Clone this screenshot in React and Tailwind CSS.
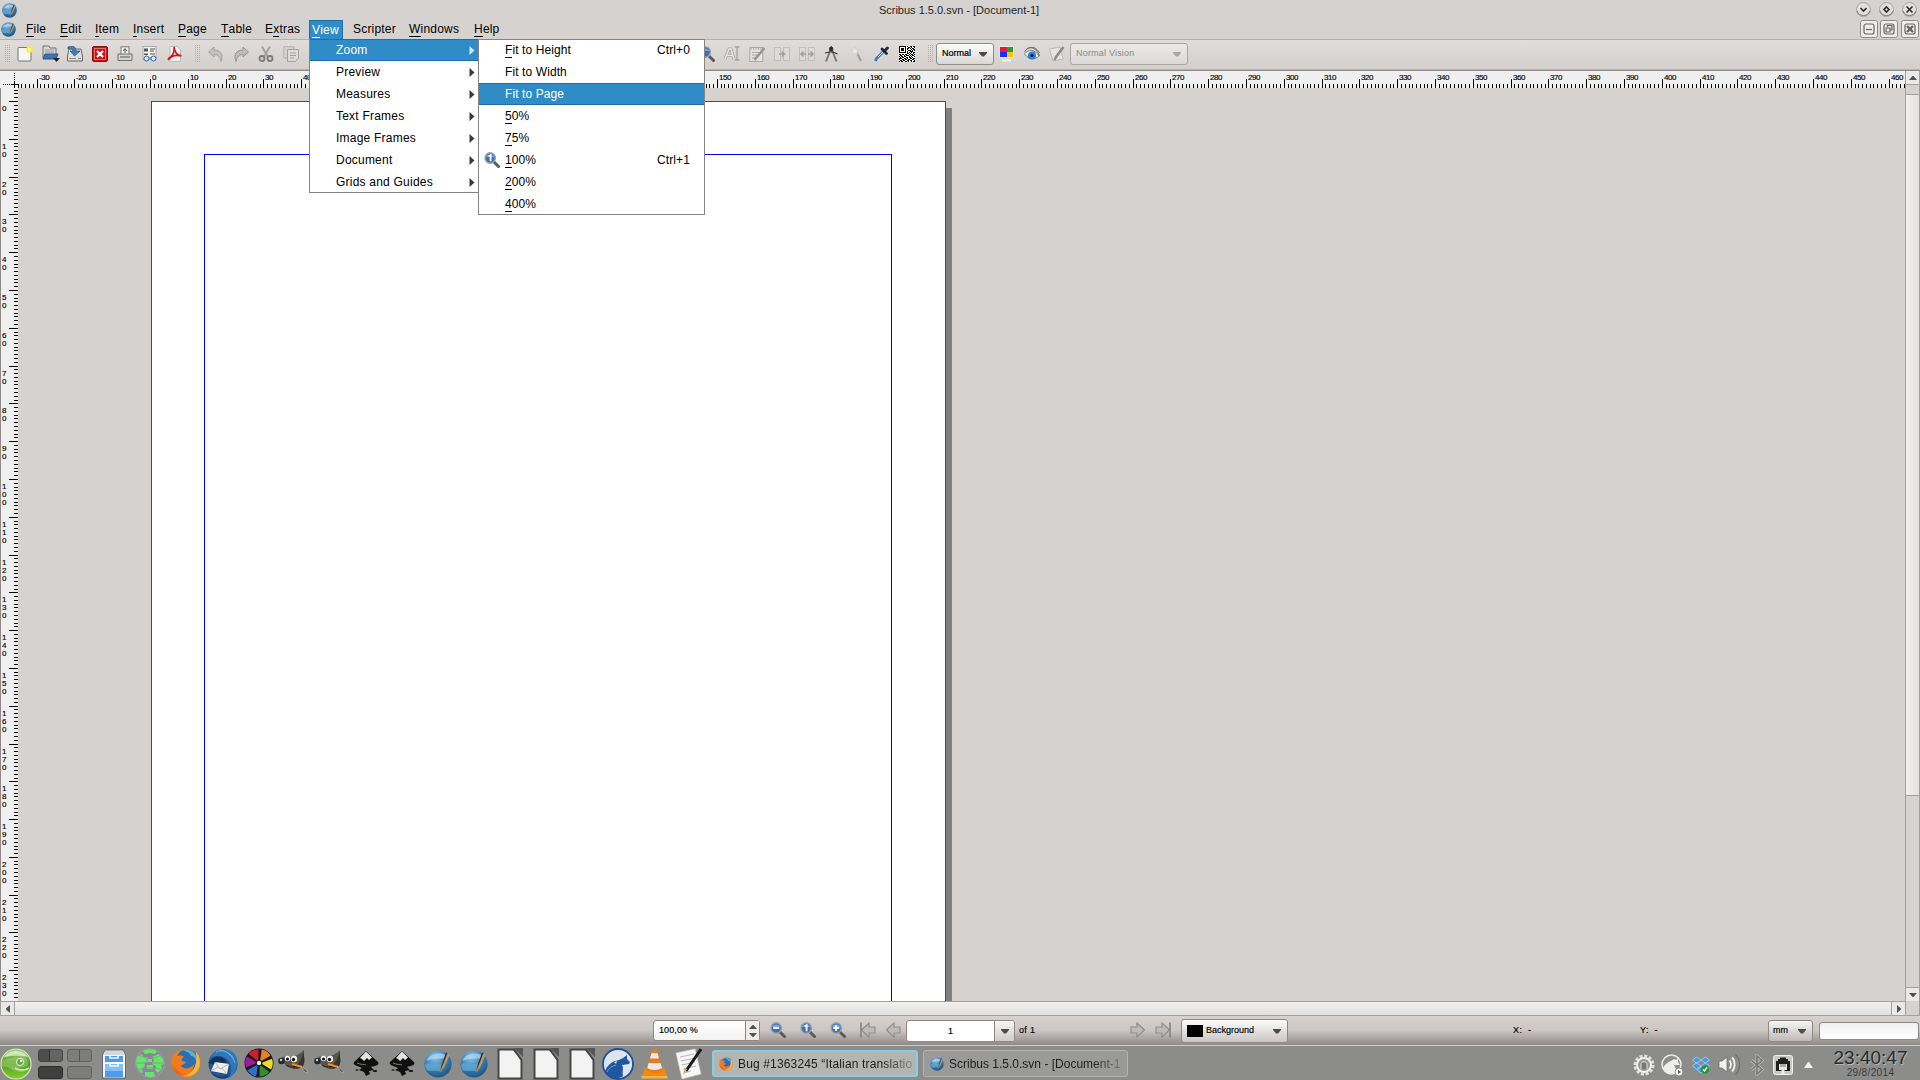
import { useState } from 'react';

const MM = 3.7795;

const menuItems = [
  { label: 'File', width: 'w-[34px]', key: 0 },
  { label: 'Edit', width: 'w-[35px]', key: 0 },
  { label: 'Item', width: 'w-[38px]', key: 0 },
  { label: 'Insert', width: 'w-[45px]', key: 0 },
  { label: 'Page', width: 'w-[43px]', key: 0 },
  { label: 'Table', width: 'w-[44px]', key: 0 },
  { label: 'Extras', width: 'w-[48px]', key: 1 },
  { label: 'View', width: 'w-[34px] mr-[6px]', key: 0 },
  { label: 'Scripter', width: 'w-[56px]', key: -1 },
  { label: 'Windows', width: 'w-[65px]', key: 0 },
  { label: 'Help', width: 'w-[40px]', key: 0 },
];

const viewMenu = ['Zoom', 'Preview', 'Measures', 'Text Frames', 'Image Frames', 'Document', 'Grids and Guides'];

const zoomMenu = [
  { label: 'Fit to Height', shortcut: 'Ctrl+0', key: 0 },
  { label: 'Fit to Width', key: -1 },
  { label: 'Fit to Page', key: -1, active: true },
  { label: '50%', key: 0 },
  { label: '75%', key: 0 },
  { label: '100%', shortcut: 'Ctrl+1', key: 0, icon: true },
  { label: '200%', key: 0 },
  { label: '400%', key: 0 },
];

const Icon = ({ size = 16, box = 16, className = '', children }) => (
  <svg width={size} height={size} viewBox={`0 0 ${box} ${box}`} className={`shrink-0 ${className}`} fill="none">
    {children}
  </svg>
);

const Mnemonic = ({ text, index }) => {
  if (index < 0) return <span>{text}</span>;
  return (
    <span>
      {text.slice(0, index)}
      <span className="inline-block h-[15px] border-b border-current leading-[15px]">{text[index]}</span>
      {text.slice(index + 1)}
    </span>
  );
};

/* ---------- logos ---------- */

const ScribusLogo = ({ size = 14, className = '' }) => (
  <Icon size={size} box={32} className={className}>
    <defs>
      <radialGradient id="scribusBall" cx="0.4" cy="0.25" r="0.8">
        <stop offset="0" stopColor="#8fc3e6" />
        <stop offset="0.5" stopColor="#3b84b8" />
        <stop offset="1" stopColor="#1d4f7c" />
      </radialGradient>
    </defs>
    <circle cx="16" cy="16" r="15.5" fill="url(#scribusBall)" />
    <path d="M3 12C7 3 23 1 28 9C20 10 12 9 3 12Z" fill="#b5d8ef" opacity="0.7" />
    <path d="M1 17C8 12 15 19 22 15L20 25C13 22 7 25 3 23Z" fill="#5fa7d3" opacity="0.8" />
    <path d="M27 3L29 6L23 20L18 25L19 17Z" fill="#b99a68" />
    <path d="M27 3L25 3L20 17L18 25L22 16Z" fill="#29333c" />
  </Icon>
);

const FirefoxLogo = ({ size = 30 }) => (
  <Icon size={size} box={30}>
    <defs>
      <linearGradient id="fox" x1="0" y1="0" x2="1" y2="1">
        <stop offset="0" stopColor="#f59a26" />
        <stop offset="0.5" stopColor="#e8611c" />
        <stop offset="1" stopColor="#e9a12c" />
      </linearGradient>
    </defs>
    <circle cx="15" cy="15" r="14.5" fill="url(#fox)" />
    <circle cx="16" cy="12.5" r="11" fill="#2a6fb3" />
    <path d="M12 2.5C19 -1 27 6 26 14C24 9 22 8 20 8C19 5 15 3 12 2.5Z" fill="#49b6e0" />
    <path d="M2 5C4 5 6 6 7 8C10 7 12 8 13 9C11 10 10 11 11 13L15 14C14 17 11 16 10 18C13 22 20 21 23 16C23 24 16 27 9 24C2 20 0 12 2 5Z" fill="#f07c1f" />
    <path d="M25 4C30 9 30 18 26 23C22 28 16 29 12 28C21 27 27 19 25 4Z" fill="#f6b73c" />
  </Icon>
);

const GeekoLogo = () => (
  <Icon size={32} box={32}>
    <defs>
      <linearGradient id="geeko" x1="0" y1="0" x2="0" y2="1">
        <stop offset="0" stopColor="#a8d37a" />
        <stop offset="0.5" stopColor="#4f9a20" />
        <stop offset="1" stopColor="#86d02f" />
      </linearGradient>
    </defs>
    <circle cx="16" cy="16" r="15" fill="url(#geeko)" stroke="#d7ecc2" strokeWidth="1.2" />
    <path d="M4 9C9 1 23 1 28 9C20 7 12 7 4 9Z" fill="#e8f4dc" opacity="0.75" />
    <path d="M1.500 14C8 9 16 10 22 8C27 9 28 14 28 17C26 20 21 19 17 20C20 22 26 22 29 20C27 25 17 25 11 21C7 18 3 18 1.500 19Z" fill="#9fcd76" opacity="0.6" />
    <path d="M15 20C20 23 26 22 29 20" stroke="#eef7e5" strokeWidth="1.4" />
    <circle cx="20" cy="14" r="3.6" fill="#63a836" stroke="#eef7e5" strokeWidth="1" />
    <circle cx="21" cy="13" r="1.2" fill="#fff" />
  </Icon>
);

const CabinetIcon = () => (
  <svg width="24" height="30" viewBox="0 0 24 30" className="shrink-0">
    <path d="M3 1H21L23.5 6V29H0.5V6Z" fill="#f4f6f8" stroke="#63686d" />
    <path d="M3 2H21L22 6H2Z" fill="#d3d6da" />
    <rect x="3" y="7" width="18" height="6" fill="#4f9aea" />
    <rect x="3" y="15" width="18" height="13" fill="#86bff5" />
    <rect x="3" y="22" width="18" height="6" fill="#4f9aea" />
    <path d="M8 7V9H16V7M8 15V17H16V15" stroke="#f5f5f5" strokeWidth="1.6" fill="none" />
    <path d="M2 14H22" stroke="#fff" />
  </svg>
);

const GlobeIcon = () => (
  <Icon size={30} box={30}>
    <circle cx="15" cy="15" r="14.5" fill="#8e8398" stroke="#a99bb5" strokeWidth="0.8" />
    <path d="M8 3C12 0.500 18 0.500 22 3L20 6L15 5L10 6Z" fill="#5eeb63" />
    <path d="M2 9L6 6L9 9L13 9L11 12L13 14L9 15L10 18L7 21L8 25L5 24L2 19L1 14Z" fill="#5eeb63" />
    <path d="M17 9L24 6L28 11L29 16L26 17L27 21L23 25L20 22L21 18L17 16L19 12Z" fill="#5eeb63" />
    <path d="M12 11H17V14H13ZM12 17H18V21H12ZM10 24H19L20 28C17 29.500 13 29.500 10 28Z" fill="#66e26e" />
    <path d="M4 7C10 11 20 11 26 7M1 15H29M3 22C10 19 20 19 27 22" stroke="#9a83ad" strokeWidth="0.8" fill="none" />
  </Icon>
);

const ThunderbirdIcon = () => (
  <Icon size={31} box={31}>
    <circle cx="16" cy="16" r="14.5" fill="#1f5590" />
    <path d="M3 10C7 -1 23 -2 29 8C32 16 29 26 22 30C26 21 24 12 16 9C11 7 6 8 3 10Z" fill="#2f78b8" />
    <path d="M9 4C15 1 23 4 26 10M12 2C19 2 26 8 28 15" stroke="#6bb2e0" strokeWidth="1" />
    <path d="M1 15L6 10C11 7 17 9 20 14L10 17Z" fill="#12335c" />
    <path d="M8 14L22 16L20 26L4 23Z" fill="#f0eee9" />
    <path d="M8 14L13 21L22 16M4 23L11 19M20 26L15 20" stroke="#a9a6a0" strokeWidth="0.8" />
    <path d="M3 23C8 29 17 31 24 25L20 30C13 32 6 29 3 23Z" fill="#14406f" />
  </Icon>
);

const wheelColors = ['#e98021', '#f0d928', '#2e9130', '#2f6fd0', '#a2189f', '#d01c2c'];

const WheelIcon = () => (
  <Icon size={30} box={30}>
    <circle cx="15" cy="15" r="14.5" fill="#1d1a1a" />
    {wheelColors.map((color, i) => (
      <path key={color} d="M15 11.500L12.500 1.500C16 0.700 20 1.500 23 4L16.500 12Z" fill={color} transform={`rotate(${i * 60 + 22} 15 15)`} />
    ))}
    <circle cx="15" cy="15" r="2.2" fill="#f1f1f1" />
  </Icon>
);

const GimpIcon = () => (
  <svg width="31" height="26" viewBox="0 0 31 26" className="shrink-0">
    <path d="M4 8L9 7C15 9 21 6 26 1C25 7 28 12 25 17C20 22 10 20 6 14Z" fill="#5b5549" />
    <path d="M26 1C25 7 28 12 25 17C22 20 17 20 14 19C22 16 24 9 26 1Z" fill="#38342d" />
    <circle cx="3.5" cy="12" r="3.3" fill="#1c2a2c" />
    <circle cx="3" cy="11" r="1.2" fill="#b7d4d2" />
    <circle cx="9.5" cy="9.5" r="2.8" fill="#f1f1ee" />
    <circle cx="16" cy="10" r="3.2" fill="#f1f1ee" />
    <circle cx="9.5" cy="10" r="1.5" fill="#111" />
    <circle cx="15.5" cy="10.5" r="1.7" fill="#111" />
    <path d="M8 16C12 19 17 18 20 16" stroke="#22201c" fill="none" />
    <path d="M14 15L24 18" stroke="#ee8c25" strokeWidth="2" />
    <path d="M23 17L30 23L27 23Z" fill="#3b3b3b" stroke="#c7c7c7" strokeWidth="0.5" />
  </svg>
);

const InkscapeIcon = () => (
  <svg width="28" height="27" viewBox="0 0 28 27" className="shrink-0">
    <path d="M14 1L26 12C28 15 23 16 19 17L22 20L17 21L18 24L14 26L12 22L7 20L10 18C6 16 0 15 2 12Z" fill="#101010" />
    <path d="M14 1.5L20 7.5L17 10L15 8L12 11L10 9L8 8Z" fill="#e2e2e2" />
    <path d="M5 13C9 15 12 14 14 15" stroke="#777" fill="none" />
    <ellipse cx="23" cy="21" rx="2.4" ry="1" fill="#111" />
    <ellipse cx="5" cy="20" rx="1.6" ry="0.8" fill="#111" />
  </svg>
);

const DocIcon = () => (
  <svg width="26" height="32" viewBox="0 0 26 32" className="shrink-0">
    <path d="M1.5 1.5H17L24.500 12V30.500H1.500Z" fill="#f3f3f3" stroke="#464646" strokeWidth="2" />
    <path d="M17 0H26V9Z" fill="#555" />
    <path d="M17 1L25 11V13L15 1Z" fill="#464646" />
  </svg>
);

const WolfIcon = () => (
  <Icon size={32} box={32}>
    <circle cx="16" cy="16" r="15" fill="#dfe5ee" stroke="#1d5296" strokeWidth="1.8" />
    <path d="M3 24C4 19 8 15 13 13L17 12L21 10L25 7L25 11L28 14L27 16L20 17C22 20 20 23 21 28C16 32 7 30 3 24Z" fill="#1f57a3" />
    <path d="M5 24C7 20 10 18 14 17" stroke="#6a9bd6" />
    <path d="M12 14L15 13L14 16Z" fill="#dfe5ee" />
  </Icon>
);

const VlcIcon = () => (
  <svg width="27" height="31" viewBox="0 0 27 31" className="shrink-0">
    <path d="M4 20H23L26.500 29.500H0.500Z" fill="#f28a0f" />
    <path d="M0.500 28H26.500V30.500H0.500Z" fill="#f9b43b" />
    <path d="M11.500 1H15.500L21.500 22C18 26 9 26 5.500 22Z" fill="#ee7a12" />
    <path d="M10.600 5H16.500L18 10.500H9ZM7.600 15H19.500L21 20C17 22.500 10 22.500 6.200 20Z" fill="#e9e9e9" />
  </svg>
);

const EditorIcon = () => (
  <svg width="27" height="32" viewBox="0 0 27 32" className="shrink-0">
    <path d="M1 5L20 1L26 26L7 31Z" fill="#f7f7f7" stroke="#d0d0d0" strokeWidth="0.6" />
    <path d="M5 9L19 6M6 13L20 10M7 17L20 14M8 21L21 18M9 25L16 23" stroke="#b7b7b7" />
    <path d="M26 1L11 23" stroke="#1a1a1a" strokeWidth="3" />
    <path d="M12.500 21L8 27L10 20Z" fill="#c79a4d" />
  </svg>
);

/* ---------- toolbar ---------- */

const Magnifier = ({ sign, className = '' }) => (
  <Icon size={16} className={className}>
    <path d="M10 10L14.500 14.500" stroke="#5b5b5b" strokeWidth="3" strokeLinecap="round" />
    <circle cx="6.200" cy="6" r="5.200" fill="#4070b4" stroke="#9ba2a8" strokeWidth="1.400" />
    <path d="M2 5C3 1.500 9 1.500 10.400 5Z" fill="#7ea5d8" />
    {sign === 'minus' && <path d="M3.200 6H9.200" stroke="#fff" strokeWidth="1.800" />}
    {sign === 'plus' && <path d="M3.200 6H9.200M6.200 3V9" stroke="#fff" strokeWidth="1.800" />}
    {sign === 'one' && <path d="M4.600 4.200L6.600 3.200V9.200" stroke="#fff" strokeWidth="1.800" />}
  </Icon>
);

const Handle = ({ className = '' }) => (
  <svg width="5" height="18" className={`shrink-0 ${className}`} shapeRendering="crispEdges">
    {[0, 2, 4, 6, 8, 10, 12, 14, 16].map((y) => (
      <path key={y} d={`M0 ${y + 0.5}H1M2 ${y + 0.5}H3M4 ${y + 0.5}H5`} stroke="#b2aeab" />
    ))}
  </svg>
);

const FileIcons = () => (
  <>
    <Icon>
      <rect x="1" y="1.500" width="13" height="13.500" rx="1" fill="#f6f6f5" stroke="#777" />
      <circle cx="12.500" cy="3.500" r="3.300" fill="#f7ee3b" />
      <circle cx="12.500" cy="3.500" r="1.300" fill="#fffde0" />
    </Icon>
    <Icon size={18} box={18}>
      <path d="M1 1H7L8 3H14V13H1Z" fill="#d6d7d6" stroke="#70726f" />
      <path d="M3 5H12M3 7H12" stroke="#999" />
      <path d="M3 9H16L14 14H1Z" fill="#3f73b6" stroke="#2a5592" />
      <path d="M11 13H18L14.500 17Z" fill="#222" />
    </Icon>
    <Icon>
      <path d="M2 3H14L15.500 10V15H0.500V10Z" fill="#dedfdd" stroke="#686b68" />
      <path d="M2 12.500H9M11 12.500H14" stroke="#8b8e8b" />
      <path d="M1 1C6 -1 9 1 9 5H13L7.500 10L3 5H6C6 3 4 2 1 3Z" fill="#3d81b0" stroke="#215577" strokeWidth="0.700" />
    </Icon>
    <Icon>
      <rect x="0.500" y="0.500" width="15" height="15" rx="1.500" fill="#cf1319" stroke="#8d0d11" />
      <rect x="2.500" y="2.500" width="11" height="11" fill="none" stroke="#ee6a6a" />
      <path d="M5 5L11 11M11 5L5 11" stroke="#fff" strokeWidth="2.200" />
    </Icon>
    <Icon>
      <rect x="4" y="0.800" width="8" height="8" fill="#f3f3f2" stroke="#767876" />
      <path d="M8 7V3M6 5L8 2.500L10 5" stroke="#555" />
      <path d="M1 8H15V14.500H1Z" fill="#d4d5d3" stroke="#6f716f" />
      <path d="M3 11H13" stroke="#555" />
    </Icon>
    <Icon>
      <rect x="1" y="0.500" width="13" height="13" fill="#f2f2f1" stroke="#aaa" />
      <path d="M2 2.500H6V5.500H2ZM2 7.500H6V9H2Z" fill="#555" />
      <path d="M8 3H13M8 5H12M8 8H13" stroke="#555" />
      <circle cx="4.500" cy="12.500" r="2.500" fill="#dce9f7" stroke="#36629f" />
      <circle cx="11.500" cy="12.500" r="2.500" fill="#dce9f7" stroke="#36629f" />
      <path d="M7 12H9" stroke="#36629f" />
    </Icon>
    <Icon>
      <path d="M3 0.500H10L13.500 4V15.500H3Z" fill="#f4f4f4" stroke="#bbb" />
      <path d="M1 13C5 11 8 6 7 1M7 1C8 7 11 10 14.500 9.500M1 14C4 10 9 8.500 14.500 10" stroke="#d8151b" strokeWidth="1.700" />
    </Icon>
  </>
);

const EditIcons = () => (
  <>
    <Icon>
      <path d="M0.500 6L6 1V4C12 4 16 8 13 15.500C12 11 10 8.500 6 8.500V11Z" fill="#c3c1bf" stroke="#a5a3a1" />
    </Icon>
    <Icon>
      <path d="M15.500 6L10 1V4C4 4 0 8 3 15.500C4 11 6 8.500 10 8.500V11Z" fill="#bdbbb9" stroke="#969492" />
    </Icon>
    <Icon>
      <path d="M4 0.500L10 11M12 0.500L6 11" stroke="#a3a1a0" strokeWidth="2" />
      <circle cx="4" cy="12.500" r="2.500" stroke="#7d7b7a" strokeWidth="1.800" />
      <circle cx="12" cy="12.500" r="2.500" stroke="#7d7b7a" strokeWidth="1.800" />
    </Icon>
    <Icon>
      <rect x="0.800" y="0.800" width="10" height="11" fill="#d6d4d2" stroke="#b3b1af" />
      <path d="M4.500 3.500H15.500V12L12.500 15.500H4.500Z" fill="#dedcda" stroke="#a3a19f" />
      <path d="M7 7H13M7 9.500H13M7 12H11" stroke="#a3a19f" />
    </Icon>
  </>
);

/* 2d barcode, one string per pixel row */
const qrRows = [
  '1111111010011011', '1000001001101001', '1011101011010110', '1011101010001011',
  '1011101001110101', '1000001010011100', '1111111010101011', '0000000011010010',
  '1101101100101101', '0110010111010110', '1011011000101001', '0101100110110100',
  '1110011010011011', '1001101101100110', '0110110011011001', '1011001101001011',
];

const ToolIcons = () => (
  <>
    <Magnifier />
    <Icon>
      <path d="M1 13L5 3H7L10 13M3 9.500H8.500" stroke="#a7a5a3" strokeWidth="3" />
      <path d="M1 13L5 3H7L10 13M3 9.500H8.500" stroke="#ecebea" strokeWidth="1.300" />
      <path d="M10.500 1H15.500M13 1V14M10.500 14H15.500" stroke="#a7a5a3" strokeWidth="1.400" />
    </Icon>
    <Icon>
      <rect x="0.800" y="1.500" width="13" height="14" fill="#e3e2e0" stroke="#aaa8a6" />
      <path d="M2 1V4M4.500 1V4M7 1V4M9.500 1V4M12 1V4M3 6.500H11M3 9H9M3 12H8" stroke="#aaa8a6" />
      <path d="M15.500 2L7 12L5.500 14" stroke="#969492" strokeWidth="2.500" />
    </Icon>
    <Icon>
      <rect x="0.500" y="1.500" width="6" height="13" fill="#dddbd9" stroke="#c2c0be" />
      <rect x="9.500" y="1.500" width="6" height="13" fill="#dddbd9" stroke="#c2c0be" />
      <path d="M5 8H10M8 5.500L10.500 8L8 10.500" stroke="#a19f9d" strokeWidth="1.600" />
    </Icon>
    <Icon>
      <rect x="0.500" y="1.500" width="6" height="13" fill="#dddbd9" stroke="#c2c0be" />
      <rect x="9.500" y="1.500" width="6" height="13" fill="#dddbd9" stroke="#c2c0be" />
      <path d="M2 8H7M4.500 5.500L2 8L4.500 10.500M9 8H14M11.500 5.500L14 8L11.500 10.500" stroke="#a19f9d" strokeWidth="1.600" />
    </Icon>
    <Icon>
      <path d="M6.500 4L2 15.500M8 4L12.500 15.500" stroke="#7a7d78" strokeWidth="2" />
      <path d="M1 7L6 6H9L13.500 8" stroke="#333" strokeWidth="1.200" />
      <circle cx="7.200" cy="3" r="2.200" fill="#2d2f2d" />
      <path d="M7.200 0V3" stroke="#222" />
    </Icon>
    <Icon>
      <path d="M7 5L12 15" stroke="#a3a19f" strokeWidth="2.200" />
      <path d="M6 0L7 4L11 3L8 6L9 9L6 7L3 9L4 5L1 4L5 3Z" fill="#eae9e8" stroke="#c9c7c5" strokeWidth="0.500" />
    </Icon>
    <Icon>
      <path d="M10 5L2.500 12.500L1.500 15" stroke="#3f74b5" strokeWidth="2.800" />
      <path d="M10 5L4 11" stroke="#cfe0f3" strokeWidth="1" />
      <path d="M8 3L12.500 7.500M11 4.500L13.500 2" stroke="#1e2936" strokeWidth="2.800" strokeLinecap="round" />
    </Icon>
    <Icon>
      <rect width="16" height="16" fill="#fff" />
      <g shapeRendering="crispEdges" fill="#000">
        {qrRows.map((row, y) => [...row].map((c, x) => c === '1' && <rect key={`${x}-${y}`} x={x} y={y} width="1" height="1" />))}
      </g>
    </Icon>
  </>
);

const Caret = ({ className = 'text-[#4c4c4a]' }) => (
  <svg width="8" height="5" viewBox="0 0 8 5" className={`shrink-0 ${className}`}>
    <path d="M0 0H8V1L5 4.500H3L0 1Z" fill="currentColor" />
  </svg>
);

const Toolbar = () => (
  <div className="flex h-[30px] shrink-0 items-center border-t border-[#b5b1af] bg-linear-to-b from-[#e0ddda] to-[#d3cfcc] pb-px text-[9px]">
    <Handle className="ml-[5px] mr-[7px]" />
    <div className="flex w-[178px] items-center gap-[9px] [&>svg:nth-child(2)]:-mr-[2px]">
      <FileIcons />
    </div>
    <Handle className="mr-[8px]" />
    <div className="flex w-[491px] items-center gap-[9px]">
      <EditIcons />
    </div>
    <div className="flex w-[229px] items-center gap-[9px]">
      <ToolIcons />
    </div>
    <Handle className="mr-[3px]" />
    <div className="flex h-[22px] w-[58px] items-center justify-between rounded-[3px] border border-[#8f8c8a] bg-linear-to-b from-[#fcfcfb] to-[#dad8d6] pl-[5px] pr-[6px] text-black [-webkit-text-stroke:0.2px]">
      <span>Normal</span>
      <Caret />
    </div>
    <div className="ml-[5px] mr-[5px] flex gap-[9px]">
      <Icon>
        <path d="M0.500 0.500H14.500V11.500H0.500Z" stroke="#e9e9e8" />
        <rect x="1" y="1" width="7" height="5" fill="#e8124f" />
        <rect x="8" y="1" width="6" height="5" fill="#1da23d" />
        <rect x="1" y="6" width="7" height="5" fill="#1433ee" />
        <rect x="8" y="6" width="6" height="5" fill="#fbc50b" />
        <path d="M3 14.500H12" stroke="#f3f3f3" strokeWidth="2" />
      </Icon>
      <Icon>
        <path d="M0.500 8C4 3 11 3 15 10C11 14 5 14 0.500 8Z" fill="#f2f4f6" stroke="#777" />
        <circle cx="8" cy="9.500" r="4" fill="#2d7dd2" />
        <circle cx="8" cy="9.500" r="1.500" fill="#0c1e3a" />
        <path d="M0.500 6C4 -0.500 12 0 15.500 10M3 3C8 -0.500 13 2 15.500 7" stroke="#6b6b6b" />
      </Icon>
      <Icon>
        <path d="M0.500 3L11 1L14 13L4 15Z" fill="#e6e5e3" stroke="#bab8b6" />
        <path d="M14.500 1L7 11L5.500 14" stroke="#8e8c8a" strokeWidth="2.600" />
      </Icon>
    </div>
    <div className="flex h-[22px] w-[118px] items-center justify-between rounded-[3px] border border-[#aaa7a5] bg-linear-to-b from-[#ebe9e7] to-[#dcdad7] pl-[5px] pr-[6px] tracking-[0.2px] text-[#8b8886]">
      <span>Normal Vision</span>
      <Caret className="text-[#a9a6a4]" />
    </div>
  </div>
);

/* ---------- window chrome ---------- */

const TitleBar = () => (
  <div className="flex h-[20px] shrink-0 items-center">
    <ScribusLogo size={15} className="ml-[2px]" />
    <div className="flex-1 pl-[45px] text-center text-[11px] text-[#1f1f1f]">Scribus 1.5.0.svn - [Document-1]</div>
    <div className="flex gap-[8px] pr-[3px]">
      {['M4.500 6L7.500 9L10.500 6', 'M7.500 5L10 7.500L7.500 10L5 7.500Z', 'M4.500 4.500L10.500 10.500M10.500 4.500L4.500 10.500'].map((d) => (
        <Icon key={d} size={15} box={15} className="-mt-px">
          <circle cx="7.500" cy="7.500" r="7" fill="#e2e0de" stroke="#a5a19f" />
          <path d="M1 9C3 15 12 15 14 9" stroke="#777371" />
          <path d={d} stroke="#2b2b2b" strokeWidth="1.600" />
        </Icon>
      ))}
    </div>
  </div>
);

const mdiButtons = [
  'M6 9.500H12',
  'M7.500 7V5.500H12V10H10.500M6 8H10V12H6Z',
  'M6 6L12 12M12 6L6 12',
];

const MenuBar = ({ active, onSelect }) => (
  <div className="flex h-[19px] shrink-0 items-start pl-[1px] text-[12px] tracking-[0.2px] text-black">
    <ScribusLogo size={15} className="mr-[6px] mt-[2px]" />
    {menuItems.map((item) => (
      <button
        key={item.label}
        onClick={() => onSelect(item.label)}
        className={`h-[19px] shrink-0 text-left ${item.width} ${
          active === item.label
            ? 'border-x border-t border-[#1d6fa6] bg-[#308cc6] pl-[2px] leading-[16px] text-white'
            : 'pl-[4px] leading-[17px]'
        }`}
      >
        <Mnemonic text={item.label} index={item.key} />
      </button>
    ))}
    <div className="ml-auto flex gap-[2px] pr-[1px]">
      {mdiButtons.map((d, i) => (
        <Icon key={d} size={18} box={18} className={i === 2 ? 'ml-[1px]' : ''}>
          <rect x="0.500" y="0.500" width="17" height="17" rx="2" fill="#f0eeed" stroke="#8e8a88" />
          <rect x="4" y="4" width="10" height="10" rx="2" stroke="#666462" strokeWidth="1.200" />
          <path d={d} stroke="#666462" strokeWidth={i === 2 ? 2.4 : 1.2} />
        </Icon>
      ))}
    </div>
  </div>
);

/* ---------- rulers ---------- */

const range = (from, to) => Array.from({ length: to - from + 1 }, (_, i) => from + i);

const HorizontalRuler = () => (
  <svg width="1905" height="17" className="shrink-0 bg-[#f0efef]">
    <g shapeRendering="crispEdges">
      {range(-35, 464).map((mm) => {
        const x = Math.round(150 + mm * MM);
        if (x < 18) return null;
        return <rect key={mm} x={x} y={mm % 10 === 0 ? 8 : 13} width="1" height={mm % 10 === 0 ? 9 : 4} />;
      })}
      <path d="M14.500 2V17" stroke="#000" strokeDasharray="1 1" />
      <path d="M3 13.500H18" stroke="#000" strokeDasharray="1 1" />
      <path d="M12 13.500H18M14.500 11V16" stroke="#000" />
    </g>
    <g className="text-[8px] tracking-[-0.4px]" stroke="#000" strokeWidth="0.15">
      {range(-3, 46).map((n) => (
        <text key={n} x={Math.round(150 + n * 10 * MM) + 2} y="9">{n * 10}</text>
      ))}
    </g>
  </svg>
);

const VerticalRuler = () => (
  <svg width="18" height="913" className="shrink-0 border-l border-[#8d898b] bg-[#f0efef]">
    <g shapeRendering="crispEdges">
      {range(-3, 238).map((mm) => (
        <rect key={mm} x={mm % 10 === 0 ? 8 : 13} y={Math.round(13 + mm * MM)} width={mm % 10 === 0 ? 9 : 4} height="1" />
      ))}
    </g>
    <g className="text-[8px]" stroke="#000" strokeWidth="0.15">
      {range(0, 23).map((n) =>
        [...String(n * 10)].map((digit, i) => (
          <text key={`${n}-${i}`} x="1" y={Math.round(13 + n * 10 * MM) + 10 + i * 8}>{digit}</text>
        ))
      )}
    </g>
  </svg>
);

/* ---------- scrollbars ---------- */

const Arrow = ({ rotate = '' }) => (
  <svg width="8" height="8" viewBox="0 0 8 8" className={rotate}>
    <path d="M0 6L3.500 2H4.500L8 6Z" fill="#555351" />
  </svg>
);

const VerticalScrollbar = () => (
  <div className="flex w-[15px] shrink-0 flex-col border-x border-[#a3a09e] bg-[#d0ccc9]">
    <div className="flex h-[14px] items-center justify-center border-b border-[#a3a09e] bg-[#ebe9e8]"><Arrow /></div>
    <div className="h-[10px] border-b border-[#a3a09e] bg-[#d6d2cf]" />
    <div className="h-[701px] border-b border-[#a3a09e] bg-linear-to-r from-[#f2f1f0] to-[#e3e1df]" />
    <div className="flex-1 bg-[#d6d4d2]" />
    <div className="flex h-[14px] items-center justify-center border-t border-[#a3a09e] bg-[#ebe9e8]"><Arrow rotate="rotate-180" /></div>
  </div>
);

const HorizontalScrollbar = () => (
  <div className="flex h-[15px] shrink-0">
    <div className="flex w-[1906px] border-y border-l border-[#a3a09e] bg-[#ebe9e8]">
      <div className="flex w-[14px] items-center justify-center border-r border-[#a3a09e]"><Arrow rotate="-rotate-90" /></div>
      <div className="flex-1 bg-linear-to-b from-[#f2f1f0] to-[#e1e0de]" />
      <div className="flex w-[15px] items-center justify-center border-x border-[#a3a09e]"><Arrow rotate="rotate-90" /></div>
    </div>
    <div className="flex-1 border-b border-r border-[#a3a09e]" />
  </div>
);

/* ---------- status bar ---------- */

const NavArrow = ({ bar, flip, className = '' }) => (
  <Icon className={`${flip ? '-scale-x-100' : ''} ${className}`}>
    <path d="M1.500 8L9 1V5H15V11H9V15Z" fill="#bfbbb9" stroke="#918d8b" strokeWidth="1.200" />
    {bar && <path d="M1 0.500V15.500" stroke="#858180" strokeWidth="1.600" />}
  </Icon>
);

const StatusBar = () => (
  <div className="flex h-[29px] shrink-0 bg-linear-to-b from-[#d6d2cf] via-[#cbc6c3] to-[#8f8a88] pt-[3px] text-[9px] text-black [-webkit-text-stroke:0.15px]">
    <div className="ml-[653px] mt-[1px] flex h-[21px] w-[107px] rounded-[3px] border border-[#8c8987] bg-linear-to-b from-white to-[#f3f2f2]">
      <span className="flex-1 pl-[5px] leading-[19px] tracking-[0.1px]">100,00 %</span>
      <div className="flex w-[14px] flex-col items-center justify-center border-l border-[#8c8987] bg-[#ecebea]">
        <Arrow />
        <Arrow rotate="rotate-180" />
      </div>
    </div>
    <div className="ml-[10px] mt-[3px] flex gap-[14px]">
      <Magnifier sign="minus" />
      <Magnifier sign="one" />
      <Magnifier sign="plus" />
    </div>
    <div className="ml-[14px] mt-[3px] flex gap-[9px]">
      <NavArrow bar />
      <NavArrow />
    </div>
    <div className="ml-[5px] mt-[1px] flex h-[22px] w-[109px] rounded-[3px] border border-[#8c8987] bg-white">
      <span className="flex-1 text-center leading-[20px]">1</span>
      <div className="flex w-[20px] items-center justify-center rounded-r-[3px] border-l border-[#8c8987] bg-linear-to-b from-[#f6f5f5] to-[#cfcdcb]">
        <Caret />
      </div>
    </div>
    <span className="ml-[4px] w-[111px] leading-[23px] tracking-[0.3px]">of 1</span>
    <div className="mt-[3px] flex gap-[9px]">
      <NavArrow flip />
      <NavArrow bar flip />
    </div>
    <div className="ml-[10px] flex h-[24px] w-[107px] items-center rounded-[3px] border border-[#8c8987] bg-linear-to-b from-[#fdfdfd] to-[#c9c6c4] pl-[5px] pr-[6px]">
      <div className="mr-[3px] h-[12px] w-[16px] bg-black" />
      <span>Background</span>
      <Caret className="ml-auto text-[#4c4c4a]" />
    </div>
    <span className="ml-[225px] w-[127px] leading-[23px] tracking-[0.4px]">X:&nbsp; -</span>
    <span className="w-[128px] leading-[23px] tracking-[0.4px]">Y:&nbsp; -</span>
    <div className="mt-[1px] flex h-[22px] w-[45px] items-center justify-between rounded-[3px] border border-[#8c8987] bg-linear-to-b from-[#f7f7f6] to-[#bdbab8] pl-[4px] pr-[6px]">
      <span>mm</span>
      <Caret />
    </div>
    <div className="ml-[6px] mt-[3px] h-[18px] w-[100px] rounded-[3px] border border-[#8c8987] bg-linear-to-b from-[#f0f0f0] to-white" />
  </div>
);

/* ---------- desktop panel ---------- */

const Pager = () => (
  <div className="ml-[6px] grid w-[54px] grid-cols-2 gap-x-[4px] gap-y-[4px]">
    <div className="flex h-[13px] rounded-[3px] border border-[#444] bg-[#646463]"><div className="w-[11px] border-r border-[#333] bg-[#4d4d4c]" /></div>
    <div className="flex h-[13px] rounded-[3px] border border-[#5f5f5e] bg-[#7d7d7b]"><div className="w-[12px] border-r border-[#555]" /></div>
    <div className="h-[13px] rounded-[3px] border border-[#2d2d2d] bg-[#3f3f3f]" />
    <div className="h-[13px] rounded-[3px] border border-[#5f5f5e] bg-[#7d7d7b]" />
  </div>
);

const Clock = () => (
  <div className="-mt-[2px] ml-[15px] mr-[7px] w-[85px] text-center">
    <div className="text-[19px] leading-[19px] text-[#2a2a2a] [text-shadow:1px_1px_0_#b5b5b3]">23:40:47</div>
    <div className="text-[10px] leading-[12px] tracking-[0.35px] text-[#3b3b3b]">29/8/2014</div>
  </div>
);

const Tray = () => (
  <div className="ml-auto flex items-center pt-[2px]">
    <Icon size={22} box={22} className="mr-[6px]">
      <circle cx="11" cy="11" r="9" stroke="#e0e0df" strokeWidth="3" strokeDasharray="3 1.700" />
      <circle cx="11" cy="11" r="7" fill="#969694" stroke="#f0f0ef" strokeWidth="2" />
      <path d="M8 15V10C8 7 14 7 14 10V15" fill="#777775" stroke="#e4e4e3" />
    </Icon>
    <Icon size={22} box={22} className="mr-[9px]">
      <circle cx="10.500" cy="10.500" r="9.500" fill="#8f8f8d" stroke="#ececeb" strokeWidth="1.500" />
      <path d="M2 14C4 9 9 8 13 5L15 6L17 4L17 8L19 11L13 11L15 15L15 19L6 19Z" fill="#eeeeed" />
      <circle cx="18" cy="18" r="4" fill="#f5f5f5" stroke="#777" strokeWidth="0.800" />
      <path d="M17 16V20L20 18Z" fill="#555" />
    </Icon>
    <Icon size={18} box={18} className="mr-[8px]">
      <path d="M4.500 1L9 4L4.500 7L0.500 4ZM13.500 1L17.500 4L13.500 7L9 4ZM4.500 7L9 10L4.500 13L0.500 10ZM13.500 7L17.500 10L13.500 13L9 10ZM9 11L13 14L9 17L5 14Z" fill="#3e9be6" stroke="#c8e4fa" strokeWidth="0.600" />
      <circle cx="13" cy="13.500" r="4.300" fill="#209a38" />
      <path d="M11 13.500L12.500 15L15 11.500" stroke="#fff" strokeWidth="1.400" />
    </Icon>
    <Icon size={23} box={23} className="mr-[7px]">
      <path d="M1 8H4L9 4V19L4 15H1Z" fill="#f2f2f1" stroke="#6c6c6a" strokeWidth="0.800" />
      <path d="M11.500 7.500C13.500 9.500 13.500 13.500 11.500 15.500M14 4.500C17.500 8 17.500 15 14 18.500" stroke="#f0f0ef" strokeWidth="1.800" />
      <path d="M17.500 1.500C23 7 23 16 17.500 21.500" stroke="#6f6f6d" strokeWidth="1.200" />
    </Icon>
    <svg width="18" height="22" viewBox="0 0 18 22" fill="none" className="mr-[7px]">
      <path d="M3 6L14 15.500L9 20V2L14 6.500L3 16" stroke="#b9b9b7" strokeWidth="3" />
      <path d="M3 6L14 15.500L9 20V2L14 6.500L3 16" stroke="#787876" strokeWidth="1.600" />
    </svg>
    <Icon size={20} box={20} className="mr-[11px]">
      <rect x="0.500" y="0.500" width="19" height="19" rx="2" fill="#c9c9c8" stroke="#f0f0ef" />
      <path d="M3 8V6H5V4H7V2.500H13V4H15V6H17V16H3Z" fill="#202020" />
      <path d="M6 9H14V15H11.500V19H8.500V15H6Z" fill="#ececeb" />
      <path d="M8 9V12M10 9V12M12 9V12" stroke="#333" strokeWidth="0.700" />
    </Icon>
    <svg width="9" height="6" viewBox="0 0 9 6"><path d="M0 6L4 0H5L9 6Z" fill="#f0f0ef" /></svg>
    <Clock />
  </div>
);

const Taskbar = () => (
  <div className="flex h-[35px] shrink-0 items-center border-t border-[#cfccca] bg-[#8c8c8a] pt-[1px]">
    <GeekoLogo />
    <Pager />
    <div className="ml-[10px] flex items-center">
      <CabinetIcon />
      <div className="ml-[9px] flex gap-[6px]">
        <GlobeIcon />
        <FirefoxLogo />
        <ThunderbirdIcon />
        <WheelIcon />
      </div>
      <div className="-mt-[3px] ml-[4px] flex gap-[5px]">
        <GimpIcon />
        <GimpIcon />
      </div>
      <div className="ml-[7px] flex gap-[8px]">
        <InkscapeIcon />
        <InkscapeIcon />
      </div>
      <div className="ml-[8px] flex gap-[8px]">
        <ScribusLogo size={28} />
        <ScribusLogo size={28} />
      </div>
      <div className="ml-[9px] flex gap-[10px]">
        <DocIcon />
        <DocIcon />
        <DocIcon />
      </div>
      <div className="ml-[7px] flex items-center gap-[7px]">
        <WolfIcon />
        <VlcIcon />
        <EditorIcon />
      </div>
    </div>
    <div className="ml-[10px] flex gap-[5px] text-[12px] tracking-[0.15px] text-[#1d1d1d]">
      <div className="flex h-[27px] w-[206px] items-center rounded-[3px] border-2 border-[#84cfe2] bg-[#b4b4b2] pl-[5px]">
        <FirefoxLogo size={14} />
        <span className="ml-[5px] w-[176px] overflow-hidden whitespace-nowrap [mask-image:linear-gradient(to_right,black_82%,transparent_105%)]">
          Bug #1363245 “Italian translatio
        </span>
      </div>
      <div className="flex h-[27px] w-[205px] items-center rounded-[3px] border border-[#b3b3b1] bg-[#9a9a98] pl-[6px]">
        <ScribusLogo size={14} />
        <span className="ml-[5px] w-[174px] overflow-hidden whitespace-nowrap tracking-normal [mask-image:linear-gradient(to_right,black_82%,transparent_105%)]">
          Scribus 1.5.0.svn - [Document-1
        </span>
      </div>
    </div>
    <Tray />
  </div>
);

/* ---------- menus ---------- */

const SubArrow = () => (
  <svg width="6" height="9" viewBox="0 0 6 9" className="mr-[3px]">
    <path d="M0.500 0L5.500 4.500L0.500 9Z" fill="currentColor" />
  </svg>
);

const ViewMenu = () => (
  <div className="absolute left-[309px] top-[39px] z-10 flex items-start text-[12px] text-black">
    <div className="w-[170px] border border-[#868482] bg-white tracking-[0.22px]">
      {viewMenu.map((label, i) => (
        <div
          key={label}
          className={`flex h-[22px] items-center justify-between pl-[26px] first:-mt-px last:-mb-px ${
            i === 0 ? 'border-y border-[#1d6fa6] bg-[#308cc6] text-white' : ''
          }`}
        >
          <span>{label}</span>
          <span className={i === 0 ? 'text-[#d3e5f2]' : 'text-[#3a3a3a]'}><SubArrow /></span>
        </div>
      ))}
    </div>
    <div className="-ml-px w-[227px] border border-[#868482] bg-white tracking-[0.1px]">
      {zoomMenu.map((item) => (
        <div
          key={item.label}
          className={`flex h-[22px] items-center pr-[14px] first:-mt-px last:-mb-px ${
            item.active ? 'border-y border-[#1d6fa6] bg-[#308cc6] text-white' : ''
          }`}
        >
          <div className="w-[26px] pl-[5px]">{item.icon && <Magnifier sign="one" />}</div>
          <Mnemonic text={item.label} index={item.key} />
          {item.shortcut && <span className="ml-auto">{item.shortcut}</span>}
        </div>
      ))}
    </div>
  </div>
);

const App = () => {
  const [openMenu, setOpenMenu] = useState('View');

  return (
    <div className="relative flex h-[1080px] w-[1920px] flex-col overflow-hidden bg-[#d6d2cf] font-['Liberation_Sans',Arial,sans-serif]">
      <TitleBar />
      <MenuBar active={openMenu} onSelect={(label) => setOpenMenu(openMenu === label ? null : label)} />
      <Toolbar />
      <div className="h-[2px] shrink-0 border-b border-[#8f8b8c] bg-[#b7b3b2]" />
      <div className="flex h-[930px] shrink-0">
        <div className="flex w-[1905px] flex-col">
          <HorizontalRuler />
          <div className="flex h-[913px] overflow-hidden">
            <VerticalRuler />
            <div className="flex flex-1 items-start overflow-hidden pl-[133px] pt-[13px]">
              {/* A4 page */}
              <div className="h-[1123px] w-[795px] shrink-0 border border-[#ff0000] bg-white px-[52px] pt-[52px] shadow-[6px_7px_0_0_#808080]">
                <div className="h-[1017px] w-[688px] border border-[#0000ff]" />
              </div>
            </div>
          </div>
        </div>
        <VerticalScrollbar />
      </div>
      <HorizontalScrollbar />
      <StatusBar />
      <Taskbar />
      {openMenu === 'View' && <ViewMenu />}
    </div>
  );
};

export default App;
